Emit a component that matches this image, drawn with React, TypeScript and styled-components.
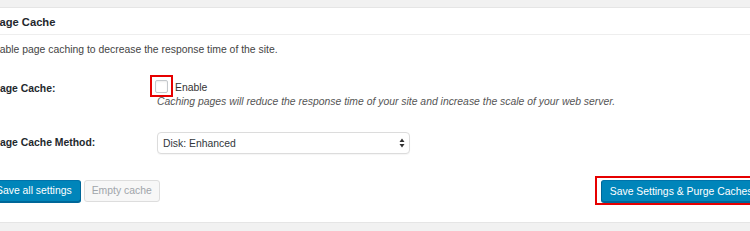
import React from "react";
import styled, { createGlobalStyle } from "styled-components";

const Global = createGlobalStyle`
  html, body { margin: 0; padding: 0; }
  body {
    background: #f1f1f1;
    overflow: hidden;
    width: 750px;
    height: 231px;
    font-family: "Liberation Sans", Arial, sans-serif;
    color: #23282d;
  }
`;

const Page = styled.div`
  width: 820px;
  margin-left: -20px;
  padding-top: 7px;
`;

const Panel = styled.section`
  background: #fff;
  border-top: 1px solid #e5e5e5;
  border-bottom: 1px solid #e5e5e5;
  height: 216px;
  box-sizing: border-box;
`;

const PanelHeader = styled.h3`
  margin: 0;
  height: 27px;
  box-sizing: border-box;
  padding: 1px 0 0 12px;
  font-size: 11.2px;
  font-weight: bold;
  line-height: 26px;
  color: #23282d;
  border-bottom: 1px solid #eee;
`;

const Inside = styled.div`
  padding: 0 0 0 7px;
`;

const Description = styled.p`
  margin: 8px 0 0;
  font-size: 10.4px;
  line-height: 14px;
  color: #444;
`;

const Row = styled.div<{ $top: number }>`
  display: grid;
  grid-template-columns: 170px 1fr;
  align-items: start;
  margin-top: ${(p) => p.$top}px;
  padding-left: 6px;
`;

const Label = styled.div<{ $pad: number }>`
  font-size: 10.4px;
  font-weight: bold;
  color: #23282d;
  line-height: 14px;
  padding-top: ${(p) => p.$pad}px;
`;

const Field = styled.div`
  display: flex;
  flex-direction: column;
  margin-left: -6px;
`;

const CheckLine = styled.div`
  display: flex;
  align-items: center;
  margin-left: -7px;
`;

const Marker = styled.span<{ $pad: string }>`
  display: inline-flex;
  border: 2px solid #e60000;
  padding: ${(p) => p.$pad};
`;

const Checkbox = styled.span`
  display: block;
  width: 13px;
  height: 13px;
  box-sizing: border-box;
  border: 1px solid #c4c8cc;
  border-radius: 2px;
  background: #fff;
  box-shadow: inset 0 1px 2px rgba(0, 0, 0, 0.07);
`;

const CheckLabel = styled.span`
  font-size: 10.4px;
  color: #333;
  margin-left: 2px;
  padding-top: 3px;
`;

const Hint = styled.span`
  font-size: 10.4px;
  font-style: italic;
  color: #555;
  line-height: 12px;
  margin-top: -1px;
`;

const SelectBox = styled.div`
  position: relative;
  width: 253px;
  height: 22px;
  box-sizing: border-box;
  border: 1px solid #dcdcdc;
  border-radius: 4px;
  background: #fff;
  box-shadow: 0 1px 1px rgba(0, 0, 0, 0.04);
  display: flex;
  align-items: center;
  padding-left: 5px;
  font-size: 10.4px;
  color: #32373c;
`;

const Arrows = styled.svg`
  position: absolute;
  right: 4px;
  top: 5px;
`;

const Actions = styled.div`
  display: flex;
  align-items: center;
  margin-top: 22px;
  padding-left: 0;
`;

const Button = styled.button<{ $primary?: boolean }>`
  height: 22px;
  box-sizing: border-box;
  padding: 0 ${(p) => (p.$primary ? 8 : 7)}px;
  font-family: "Liberation Sans", Arial, sans-serif;
  font-size: 10.4px;
  border-radius: 3px;
  border-width: 1px;
  border-style: solid;
  border-color: ${(p) => (p.$primary ? "#0073aa #006799 #006799" : "#ddd")};
  background: ${(p) => (p.$primary ? "#0085ba" : "#f7f7f7")};
  color: ${(p) => (p.$primary ? "#fff" : "#a0a5aa")};
  box-shadow: ${(p) => (p.$primary ? "0 1px 0 #006799" : "none")};
  white-space: nowrap;
  cursor: pointer;
`;

const LeftGroup = styled.div`
  display: flex;
  gap: 3px;
`;

const RightGroup = styled.div`
  margin-left: 435px;
  display: flex;
`;

export default function App() {
  return (
    <>
      <Global />
      <Page>
        <Panel>
          <PanelHeader>Page Cache</PanelHeader>
          <Inside>
            <Description>Enable page caching to decrease the response time of the site.</Description>
            <Row $top={18}>
              <Label $pad={7}>Page Cache:</Label>
              <Field>
                <CheckLine>
                  <Marker $pad="3px 3px 2px 3px">
                    <Checkbox />
                  </Marker>
                  <CheckLabel>Enable</CheckLabel>
                </CheckLine>
                <Hint>
                  Caching pages will reduce the response time of your site and increase the scale of your web server.
                </Hint>
              </Field>
            </Row>
            <Row $top={24}>
              <Label $pad={4}>Page Cache Method:</Label>
              <Field>
                <SelectBox>
                  Disk: Enhanced
                  <Arrows width="6" height="10" viewBox="0 0 6 10">
                    <path d="M3 0.5 L5.5 4 L0.5 4 Z" fill="#333" />
                    <path d="M3 9.5 L5.5 6 L0.5 6 Z" fill="#333" />
                  </Arrows>
                </SelectBox>
              </Field>
            </Row>
            <Actions>
              <LeftGroup>
                <Button $primary>Save all settings</Button>
                <Button>Empty cache</Button>
              </LeftGroup>
              <RightGroup>
                <Marker $pad="2px 4px 1px 4px">
                  <Button $primary>Save Settings &amp; Purge Caches</Button>
                </Marker>
              </RightGroup>
            </Actions>
          </Inside>
        </Panel>
      </Page>
    </>
  );
}
